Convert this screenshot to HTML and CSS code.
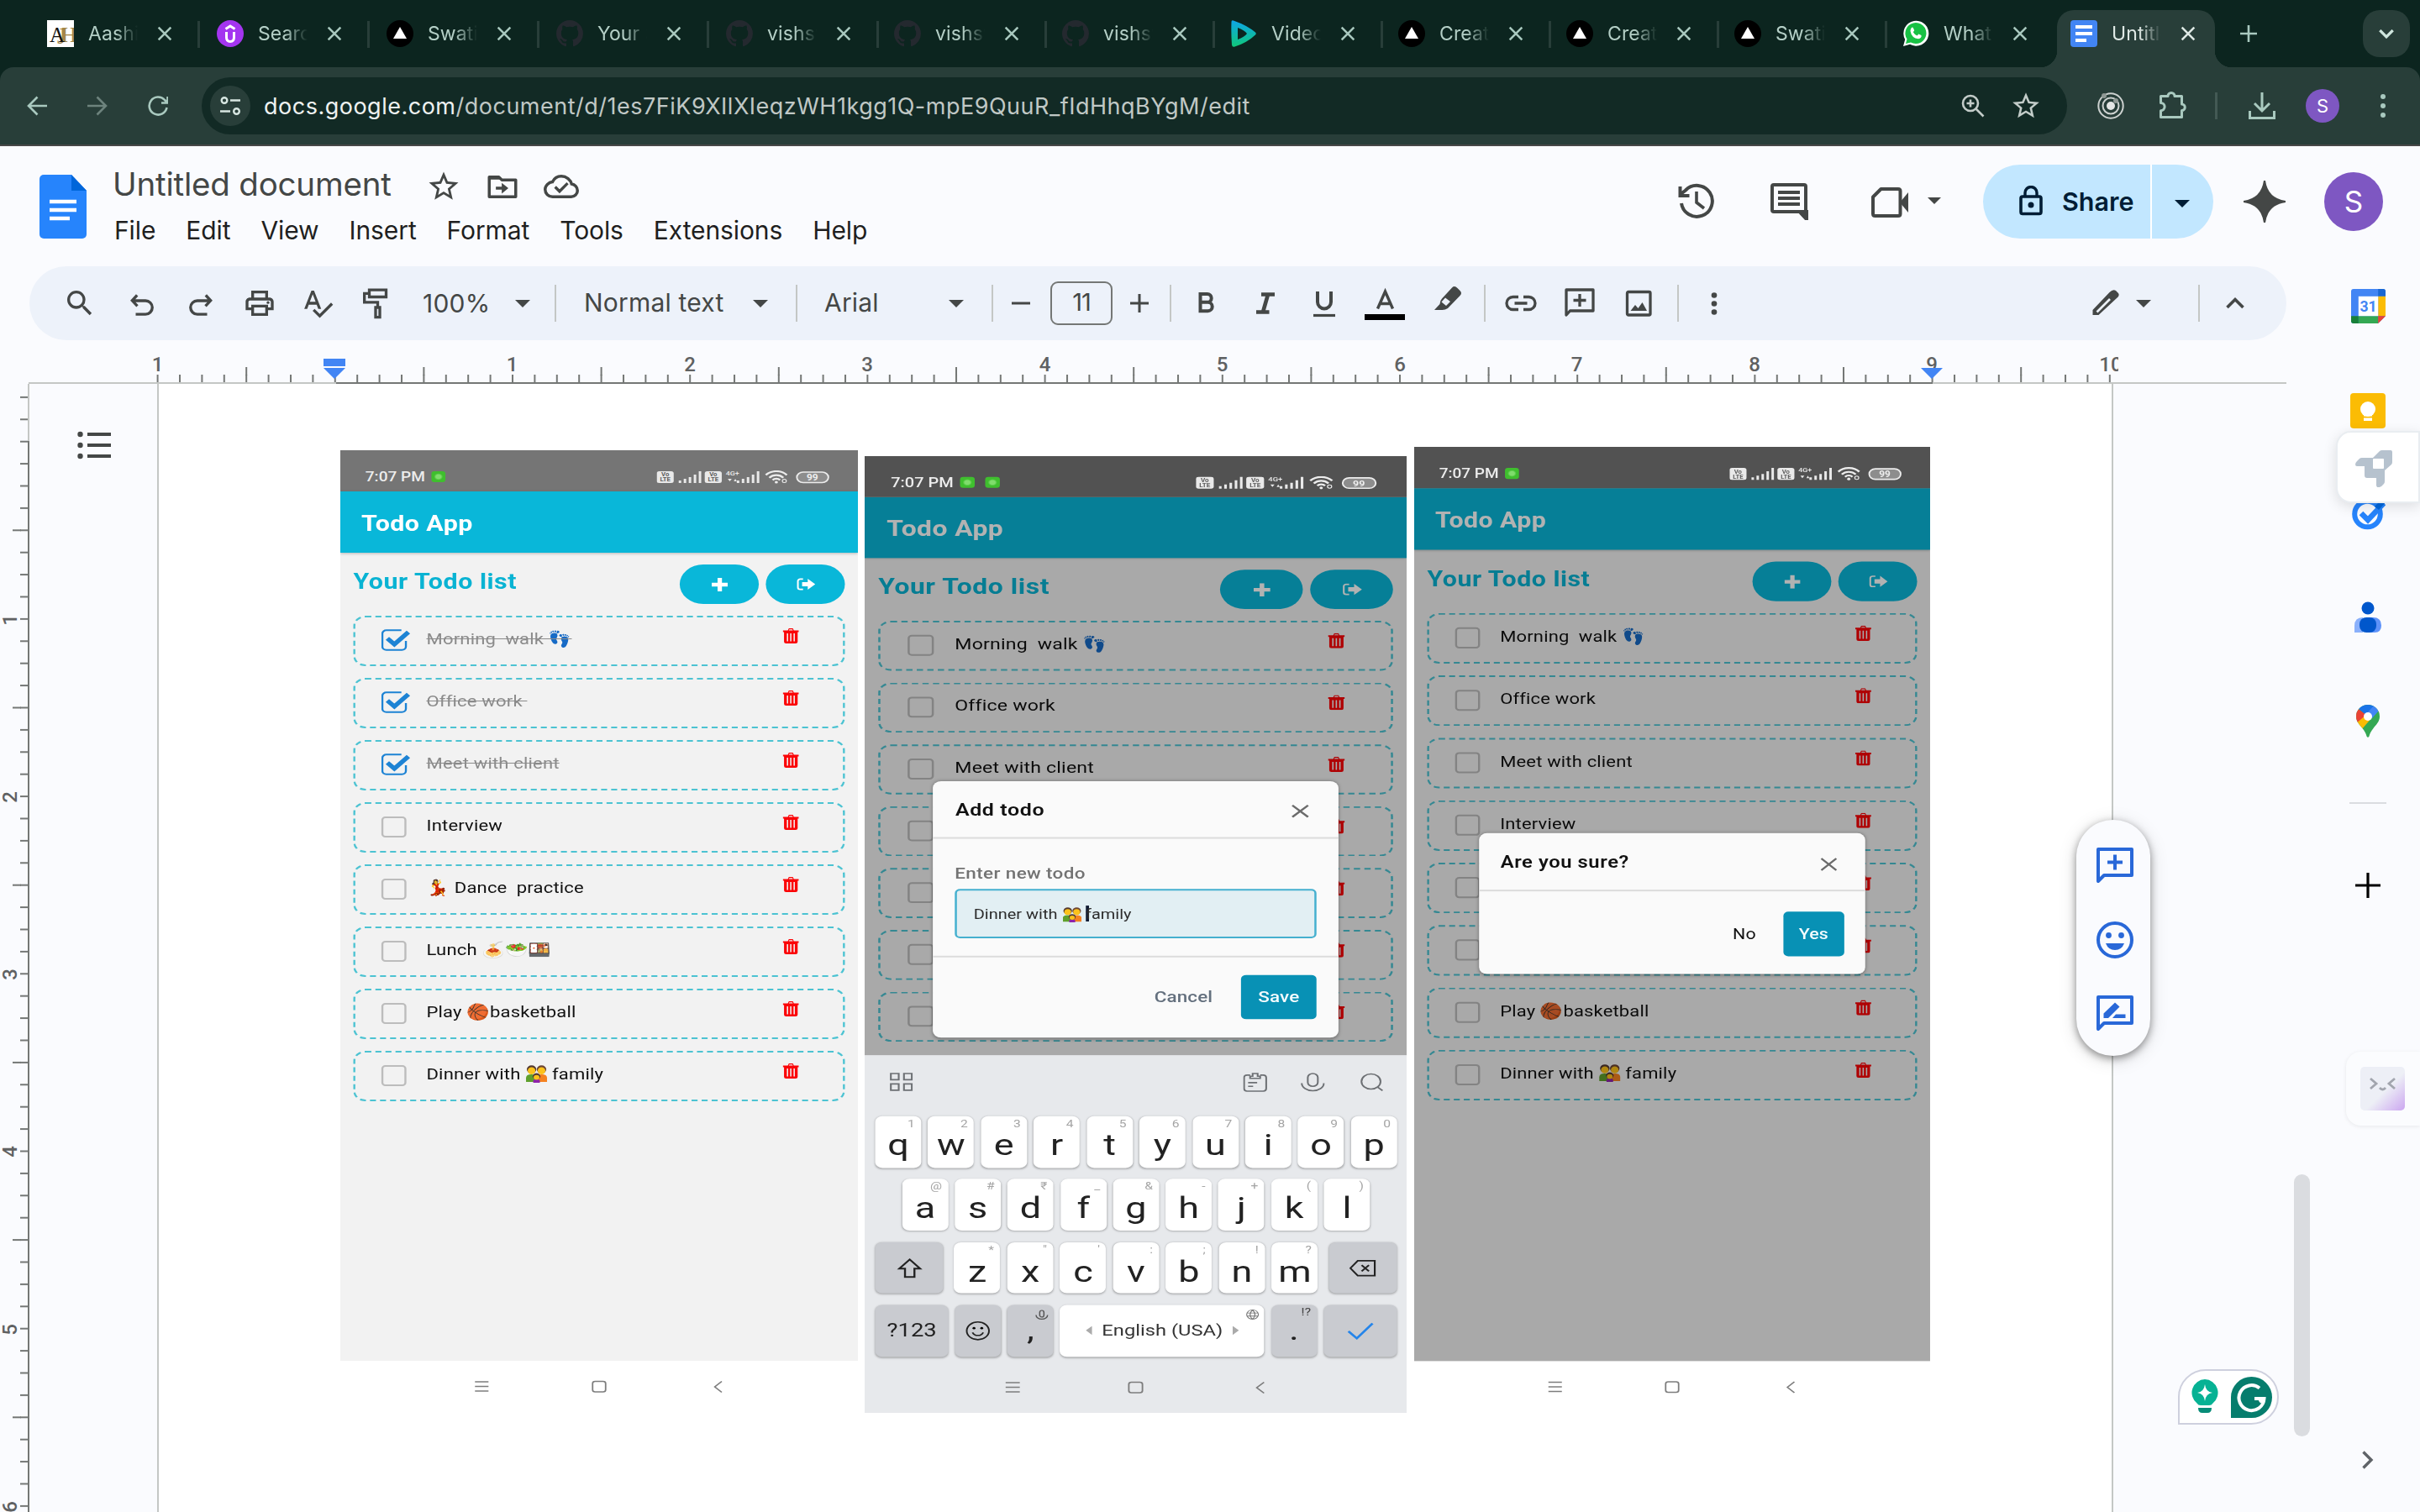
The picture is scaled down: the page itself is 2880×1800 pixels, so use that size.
FILE: index.html
```html
<!DOCTYPE html>
<html lang="en">
<head>
<meta charset="utf-8">
<title>Untitled document</title>
<link rel="stylesheet" href="styles.css">
</head>
<body>
<svg class="sprite" aria-hidden="true">
  <symbol id="close" viewBox="0 0 24 24"><path d="M4 4l16 16M20 4L4 20" fill="none" stroke="currentColor" stroke-width="2.8"/></symbol>
  <symbol id="caret" viewBox="0 0 18 9"><path d="M0 0h18l-9 9z" fill="currentColor"/></symbol>
  <symbol id="tri" viewBox="0 0 32 32"><circle cx="16" cy="16" r="16" fill="#000"/><path d="M16 8l8 14H8z" fill="#fff"/></symbol>
  <symbol id="gh" viewBox="0 0 16 16"><path fill="#24292f" d="M8 0C3.58 0 0 3.58 0 8c0 3.54 2.29 6.53 5.47 7.59.4.07.55-.17.55-.38 0-.19-.01-.82-.01-1.49-2.01.37-2.53-.49-2.69-.94-.09-.23-.48-.94-.82-1.13-.28-.15-.68-.52-.01-.53.63-.01 1.08.58 1.23.82.72 1.21 1.87.87 2.33.66.07-.52.28-.87.51-1.07-1.78-.2-3.64-.89-3.64-3.95 0-.87.31-1.59.82-2.15-.08-.2-.36-1.02.08-2.12 0 0 .67-.21 2.2.82.64-.18 1.32-.27 2-.27s1.36.09 2 .27c1.53-1.04 2.2-.82 2.2-.82.44 1.1.16 1.92.08 2.12.51.56.82 1.27.82 2.15 0 3.07-1.87 3.75-3.65 3.95.29.25.54.73.54 1.48 0 1.07-.01 1.93-.01 2.2 0 .21.15.46.55.38A8.01 8.01 0 0 0 16 8c0-4.42-3.58-8-8-8z"/></symbol>
  <symbol id="star" viewBox="0 0 24 24"><path fill="currentColor" d="M22 9.24l-7.19-.62L12 2 9.19 8.63 2 9.24l5.46 4.73L5.82 21 12 17.27 18.18 21l-1.63-7.03L22 9.24zM12 15.4l-3.76 2.27 1-4.28-3.32-2.88 4.38-.38L12 6.1l1.71 4.04 4.38.38-3.32 2.88 1 4.28L12 15.4z"/></symbol>
  <symbol id="trash" viewBox="0 0 16 18"><path fill="#fb0407" d="M5 2.5L6 0h4l1 2.5h5v2h-1.2V16q0 2-2 2H3.200q-2 0-2-2V4.500H0v-2zM6.500 1.300L6 2.500h4L9.500 1.300zM4 6v9.500h1.300V6zM7.300 6v9.500h1.300V6zM10.700 6v9.500H12V6z" fill-rule="evenodd"/></symbol>
  <symbol id="check" viewBox="0 0 29 26"><path d="M20 1.300H5a4 4 0 0 0-4 4v15.400a4 4 0 0 0 4 4h15.500a4 4 0 0 0 4-4V14" fill="none" stroke="#1d83d4" stroke-width="2"/><path d="M6 11l7 7L27 3.500" fill="none" stroke="#1d83d4" stroke-width="4.800"/></symbol>
  <symbol id="plus" viewBox="0 0 16 16"><path d="M8 0v16M0 8h16" stroke="#fff" stroke-width="4.400"/></symbol>
  <symbol id="logout" viewBox="0 0 20 16"><path d="M7 1.500H4a2.500 2.500 0 0 0-2.500 2.500v8A2.500 2.500 0 0 0 4 14.500h3" fill="none" stroke="#fff" stroke-width="1.800"/><path d="M12 1l8 7-8 7v-4.300H6V5.300h6z" fill="#fff"/></symbol>
  <symbol id="family" viewBox="0 0 22 22"><path d="M0 21v-5q0-4.500 5.500-4.500T11 16v5z" fill="#5fa02c"/><path d="M11 21v-5q0-4.500 5.500-4.500T22 16v5z" fill="#f58220"/><circle cx="5.800" cy="5.300" r="5" fill="#543930"/><circle cx="16.200" cy="5.300" r="5" fill="#6d4534"/><ellipse cx="5.800" cy="7" rx="4" ry="4.400" fill="#fcc21b"/><ellipse cx="16.200" cy="7" rx="4" ry="4.400" fill="#fcc21b"/><path d="M7.500 22v-2q0-2.500 3.500-2.500t3.500 2.500v2z" fill="#8e24aa"/><circle cx="11" cy="14" r="4" fill="#543930"/><ellipse cx="11" cy="15.300" rx="3" ry="3" fill="#fcc21b"/></symbol>
  <symbol id="phonestat" viewBox="0 0 174 16"><g fill="#e9e9e9"><rect x="0" y="1" width="17" height="14" rx="2.500"/><rect x="48" y="1" width="17" height="14" rx="2.500"/><path d="M22 12h2.500v3H22zM27 10h2.500v5H27zM32 8h2.500v7H32zM37 5h2.500v10H37zM42 1h2.500v14H42zM80 12h2.500v3H80zM85 10h2.500v5H85zM90 8h2.500v7H90zM95 5h2.500v10H95zM100 1h2.500v14H100z"/><path d="M71 10l2 3 2-3zM77 13l1.500-3 1.500 3z"/></g><g fill="#5c5c5c" font-family="Roboto" font-weight="700" font-size="6.500" text-anchor="middle"><text x="8.500" y="7.500">Vo</text><text x="8.500" y="13.500">LTE</text><text x="56.500" y="7.500">Vo</text><text x="56.500" y="13.500">LTE</text></g><text x="69" y="6" font-family="Roboto" font-size="7.500" fill="#e9e9e9">4G+</text><g fill="none" stroke="#ececec" stroke-width="2.200"><path d="M109 5.500a14.500 14.500 0 0 1 21 0M112.500 8.700a9.500 9.500 0 0 1 14 0M115.800 11.500a5 5 0 0 1 7.400 0"/><rect x="140" y="2" width="31.500" height="12.500" rx="6.200" stroke-width="1.600" fill="#8d8d8d"/><circle cx="127.500" cy="12.500" r="2" stroke-width="1"/></g><circle cx="119.500" cy="14" r="1.600" fill="#ececec"/><text x="155.500" y="11.800" font-family="Roboto" font-weight="700" font-size="10" fill="#eee" text-anchor="middle">99</text></symbol>
  <symbol id="phonenav" viewBox="0 0 517 60"><g fill="none" stroke="#7d7d7d" stroke-width="1.500"><path d="M134.500 25h13.500M134.500 30.500h13.500M134.500 36h13.500"/><rect x="252" y="24.500" width="13" height="12.500" rx="2.500"/><path d="M381 24.500l-7 6.500 7 6.500"/></g></symbol>
</svg>

<div class="tabs">
  <div class="tab"><svg class="fav" viewBox="0 0 32 32"><rect width="32" height="32" fill="#fff"/><g font-family="Liberation Serif" font-size="25"><text x="17" y="26" fill="#a48646">H</text><text x="12" y="28" fill="#a48646" font-size="28">J</text><text x="3" y="26" fill="#111">A</text></g></svg><span>Aashish</span><svg class="x"><use href="#close"/></svg></div>
  <div class="tab"><svg class="fav" viewBox="0 0 32 32"><circle cx="16" cy="16" r="16" fill="#a435f0"/><path d="M10.500 10.500L16 7l5.500 3.500M11.500 14v6.500q0 5 4.500 5t4.500-5V14" fill="none" stroke="#fff" stroke-width="3"/></svg><span>Search</span><svg class="x"><use href="#close"/></svg></div>
  <div class="tab"><svg class="fav"><use href="#tri"/></svg><span>Swatik</span><svg class="x"><use href="#close"/></svg></div>
  <div class="tab"><svg class="fav"><use href="#gh"/></svg><span>Your Se</span><svg class="x"><use href="#close"/></svg></div>
  <div class="tab n"><svg class="fav"><use href="#gh"/></svg><span>vishsw</span><svg class="x"><use href="#close"/></svg></div>
  <div class="tab n"><svg class="fav"><use href="#gh"/></svg><span>vishsw</span><svg class="x"><use href="#close"/></svg></div>
  <div class="tab n"><svg class="fav"><use href="#gh"/></svg><span>vishsw</span><svg class="x"><use href="#close"/></svg></div>
  <div class="tab n"><svg class="fav" viewBox="0 0 32 32"><defs><linearGradient id="vg" x1="0" y1="0" x2="0" y2="1"><stop offset="0" stop-color="#0ea5e9"/><stop offset="1" stop-color="#10c878"/></linearGradient></defs><path fill="url(#vg)" fill-rule="evenodd" d="M1.500 2Q1.500-.500 4.500.700Q20 6 30 14.500q1.500 1.500 0 3Q20 27 5.500 31.500 2.500 32.500 2 29.500Q1 16 1.500 2zM9 9v14q8-3 11-7-3-4-11-7z"/></svg><span>Videos</span><svg class="x"><use href="#close"/></svg></div>
  <div class="tab n"><svg class="fav"><use href="#tri"/></svg><span>Create</span><svg class="x"><use href="#close"/></svg></div>
  <div class="tab n"><svg class="fav"><use href="#tri"/></svg><span>Create</span><svg class="x"><use href="#close"/></svg></div>
  <div class="tab n"><svg class="fav"><use href="#tri"/></svg><span>Swatik</span><svg class="x"><use href="#close"/></svg></div>
  <div class="tab n last"><svg class="fav" viewBox="0 0 32 32"><path d="M1 31l2.200-8A15 15 0 1 1 9 28.800z" fill="#fff"/><path d="M4 28l1.500-5.500A12.500 12.500 0 1 1 10 26.600z" fill="#18c144"/><path d="M10.500 9.500q1.500-2 2.500 0l1.200 2.800-1.400 2q1.600 3 4.800 4.200l1.700-2 3.200 1.600q.700 3.600-3.500 4.200Q11 21.500 9.500 13q0-2 1-3.500z" fill="#fff"/></svg><span>WhatsA</span><svg class="x"><use href="#close"/></svg></div>
  <div class="tab active"><svg class="fav" viewBox="0 0 32 32"><rect width="32" height="32" rx="4" fill="#4285f4"/><path d="M6 8h20M6 16h20M6 24h13" stroke="#fff" stroke-width="3.800"/></svg><span>Untitled</span><svg class="x"><use href="#close"/></svg></div>
  <svg class="newtab" viewBox="0 0 20 20"><path d="M10 0v20M0 10h20" stroke="#a9c9bf" stroke-width="2.600"/></svg>
  <div class="tabsearch"><svg viewBox="0 0 16 10"><path d="M1 1l7 7 7-7" fill="none" stroke="#cfe6de" stroke-width="3"/></svg></div>
</div>

<div class="addr">
  <svg class="ai" viewBox="0 0 24 24"><path d="M24 12H2M12.500 1.500L2 12l10.500 10.500" fill="none" stroke="#a9c9bf" stroke-width="2.600"/></svg>
  <svg class="ai" viewBox="0 0 24 24"><path d="M0 12h22M11.500 1.500L22 12 11.500 22.500" fill="none" stroke="#6d837d" stroke-width="2.600"/></svg>
  <svg class="ai" viewBox="0 0 24 24"><path d="M22.500 14A10.500 10.500 0 1 1 20 5l3 3M23.500 1v7.500H16" fill="none" stroke="#a9c9bf" stroke-width="2.600"/></svg>
  <div class="omni">
    <div class="site"><svg viewBox="0 0 24 24"><g fill="none" stroke="#d7e6e1" stroke-width="2.400"><circle cx="5" cy="5.500" r="3.300"/><path d="M12 5.500h12M0 18.500h12"/><circle cx="19.500" cy="18.500" r="3.300"/></g></svg></div>
    <div class="url"><b>docs.google.com</b>/document/d/1es7FiK9XIlXIeqzWH1kgg1Q-mpE9QuuR_fIdHhqBYgM/edit</div>
    <svg class="mag" viewBox="0 0 28 28"><g fill="none" stroke="#c3ccc9" stroke-width="2.600"><circle cx="11" cy="11" r="9"/><path d="M17.500 17.500l9 9M11 6.500v9M6.500 11h9"/></g></svg>
    <svg class="bm"><use href="#star"/></svg>
  </div>
  <svg class="ext" viewBox="0 0 32 32"><g fill="none" stroke="#cdd2d0"><circle cx="16" cy="16" r="14.700" stroke-width="2"/><circle cx="16" cy="16" r="9.500" stroke-width="2"/></g><circle cx="16" cy="16" r="5" fill="#e4e6e5"/><circle cx="8" cy="4" r="3" fill="#8f9894"/><circle cx="22" cy="10" r="3" fill="#8f9894"/></svg>
  <svg class="puz" viewBox="0 0 34 34"><path d="M3.500 5.500h8.500a4 4 0 0 1 8 0h8.500V15a3.500 3.500 0 0 1 0 7.500v8h-25v-7.800a4.500 4.500 0 0 0 0-9.200z" fill="none" stroke="#a9c9bf" stroke-width="3" stroke-linejoin="round"/></svg>
  <i class="asep"></i>
  <svg class="dl" viewBox="0 0 32 32"><path d="M16 0v21M7 13l9 9 9-9M1.500 22v8.500h29V22" fill="none" stroke="#a9c9bf" stroke-width="3"/></svg>
  <div class="me">S</div>
  <svg class="kebab" viewBox="0 0 6 28"><g fill="#a9c9bf"><circle cx="3" cy="3" r="3"/><circle cx="3" cy="14" r="3"/><circle cx="3" cy="25" r="3"/></g></svg>
</div>

<div class="docs">
  <header class="dochead">
    <svg class="logo" viewBox="0 0 56 76"><path d="M5 0h33l18 19v52a5 5 0 0 1-5 5H5a5 5 0 0 1-5-5V5a5 5 0 0 1 5-5z" fill="#2684fc"/><path d="M38 0l18 19H38z" fill="#0066da"/><path d="M12 32h32M12 42h32M12 52h24" stroke="#fff" stroke-width="4.600"/></svg>
    <div class="heads">
      <div class="titleline"><span class="dtitle">Untitled document</span>
        <svg class="ti"><use href="#star"/></svg>
        <svg class="ti fo" viewBox="0 0 24 24"><path d="M3 19V5.500h6.500l2 2H21V19z" fill="none" stroke="currentColor" stroke-width="2" stroke-linejoin="round"/><path d="M3 4.800h6.500l2.500 2.500H3zM7.500 12.200h4V9.500l4.500 3.700-4.500 3.700v-2.700h-4z" fill="currentColor"/></svg>
        <svg class="ti cl" viewBox="0 0 24 24"><path fill="none" stroke="currentColor" stroke-width="2" d="M19 10.300C18.400 7.500 15.500 5 12 5 9.500 5 7.200 6.300 6 8.900 3.500 9.200 1 11.300 1 14a5 5 0 0 0 5 5h12.800A4.200 4.200 0 0 0 23 14.800c0-2.300-1.800-4.200-4-4.500z"/><path d="M7.800 12.300l3 3 5.500-5.500" fill="none" stroke="currentColor" stroke-width="1.900"/></svg>
      </div>
      <nav class="menus"><span>File</span><span>Edit</span><span>View</span><span>Insert</span><span>Format</span><span>Tools</span><span>Extensions</span><span>Help</span></nav>
    </div>
    <svg class="hist" viewBox="0 0 44 44"><path d="M4 24a18.500 18.500 0 1 0 5-15.500L2 14M2.500 4v11h11" fill="none" stroke="#444746" stroke-width="4"/><path d="M22 10v13l9 7" fill="none" stroke="#444746" stroke-width="3.600"/></svg>
    <svg class="comm" viewBox="0 0 44 44"><path d="M2 4q0-2 2-2h36q2 0 2 2v38l-7.500-8H4q-2 0-2-2z" fill="none" stroke="#444746" stroke-width="4"/><path d="M36 34h8v10zM9 11h26M9 18h26M9 25h26" fill="#444746" stroke="#444746" stroke-width="4"/></svg>
    <svg class="cam" viewBox="0 0 44 36"><path d="M11.500 2H32q2.500 0 2.500 2.500v27q0 2.500-2.500 2.500H4.500Q2 34 2 31.500v-20z" fill="none" stroke="#444746" stroke-width="4" stroke-linejoin="round"/><path d="M34 18l10-12v24z" fill="#444746"/></svg>
    <svg class="caret c1"><use href="#caret"/></svg>
    <div class="share"><div class="sl"><svg viewBox="0 0 28 36"><rect x="2" y="13" width="24" height="20.500" rx="2" fill="none" stroke="#001d35" stroke-width="3.600"/><path d="M7 13V8.500a7 7 0 0 1 14 0V13" fill="none" stroke="#001d35" stroke-width="3.400"/><circle cx="14" cy="23" r="3.500" fill="#001d35"/></svg><span>Share</span></div><div class="sr"><svg class="caret"><use href="#caret"/></svg></div></div>
    <svg class="spark" viewBox="0 0 50 50"><path d="M25 0Q28 22 50 25 28 28 25 50 22 28 0 25 22 22 25 0z" fill="#444746" stroke="#444746" stroke-width="2"/></svg>
    <div class="avatar">S</div>
  </header>

  <div class="docbody">
    <main>
      <div class="tb">
        <svg class="i sea" viewBox="0 0 24 24"><path fill="currentColor" d="M15.500 14h-.79l-.28-.27A6.470 6.470 0 0 0 16 9.500 6.500 6.500 0 1 0 9.500 16c1.610 0 3.090-.59 4.230-1.570l.27.28v.79l5 4.990L20.490 19l-4.990-5zm-6 0C7.010 14 5 11.990 5 9.500S7.010 5 9.500 5 14 7.010 14 9.500 11.990 14 9.500 14z"/></svg>
        <svg class="i" viewBox="0 0 24 24"><path d="M8.500 5L5 8.900l3.700 3.900M5 9h9.500a4.800 4.800 0 0 1 0 9.700H7.500" transform="translate(0 1.200)" fill="none" stroke="currentColor" stroke-width="2"/></svg>
        <svg class="i" viewBox="0 0 24 24"><path d="M15.500 5L19 8.900l-3.700 3.900M19 9H9.500a4.800 4.800 0 0 0 0 9.700h7" transform="translate(0 1.200)" fill="none" stroke="currentColor" stroke-width="2"/></svg>
        <svg class="i" viewBox="0 0 24 24"><path fill="currentColor" d="M19 8h-1V3H6v5H5c-1.660 0-3 1.340-3 3v6h4v4h12v-4h4v-6c0-1.660-1.340-3-3-3zM8 5h8v3H8V5zm8 12v2H8v-4h8v2zm2-2v-2H6v2H4v-4c0-.55.45-1 1-1h14c.55 0 1 .45 1 1v4h-2z"/><circle cx="18" cy="11.500" r="1" fill="currentColor"/></svg>
        <svg class="i" viewBox="0 0 24 24"><path fill="currentColor" d="M12.450 16h2.090L9.430 3H7.570L2.460 16h2.090l1.120-3h5.640l1.140 3zm-6.020-5L8.500 5.480 10.570 11H6.430zm15.160.59l-8.090 8.090L9.830 16l-1.410 1.410 5.090 5.090L23 13l-1.410-1.410z" transform="translate(-.6 0)"/></svg>
        <svg class="i pnt" viewBox="0 0 24 24"><path d="M7.500 2.500h12v5h-12zM7.500 5H4v6.300h9.500v3.500M12 15h3v7h-3z" fill="none" stroke="currentColor" stroke-width="2"/></svg>
        <span class="t z">100%</span><svg class="caret"><use href="#caret"/></svg><i class="s s29"></i>
        <span class="t st">Normal text</span><svg class="caret"><use href="#caret"/></svg><i class="s s33"></i>
        <span class="t fn">Arial</span><svg class="caret"><use href="#caret"/></svg><i class="s s33"></i>
        <svg class="pm m1" viewBox="0 0 24 24"><path d="M1 12h22" stroke="#444746" stroke-width="3"/></svg>
        <span class="size">11</span>
        <svg class="pm m2" viewBox="0 0 24 24"><path d="M1 12h22M12 1v22" stroke="#444746" stroke-width="3"/></svg><i class="s s24"></i>
        <svg class="i b" viewBox="0 0 40 40"><path d="M12.500 9h8.300a4.900 4.900 0 0 1 0 9.800h-8.300zM12.500 18.800h9a5.200 5.200 0 0 1 0 10.400h-9zM12.500 9v20" fill="none" stroke="currentColor" stroke-width="4"/></svg>
        <svg class="i g30" viewBox="0 0 40 40"><path d="M15 9.500h16M9 30.500h15.500M23 9.500l-6 21" fill="none" stroke="currentColor" stroke-width="4.600"/></svg>
        <svg class="i g30" viewBox="0 0 40 40"><path d="M12 6v12.500a8 8 0 0 0 16 0V6" fill="none" stroke="currentColor" stroke-width="4"/><path d="M7 34.500h26" stroke="currentColor" stroke-width="3.200"/></svg>
        <svg class="acol" viewBox="0 0 48 40"><path d="M15.500 26.500L24.500 6l9 20.500M18.500 20.500h12" fill="none" stroke="currentColor" stroke-width="3.400"/><path d="M0 33h48v7H0z" fill="#000"/></svg>
        <svg class="i hl" viewBox="0 0 40 40"><path d="M24 4q3-3 6.500.500l3 3q3 3 0 6L19 28.500q-3 2-6.500 2H3l6.500-7q0-4 2.500-6.500zM16 16l-4.500 5 5.500 4.500 5-5z" transform="translate(2 -2.500)" fill="currentColor" fill-rule="evenodd"/></svg>
        <i class="s s24"></i>
        <svg class="i g22" viewBox="0 0 40 40"><path d="M17 12.500h-6.500a7.500 7.500 0 0 0 0 15H17M23 12.500h6.500a7.500 7.500 0 0 1 0 15H23M12.500 20h15" fill="none" stroke="currentColor" stroke-width="3.300"/></svg>
        <svg class="i g30" viewBox="0 0 40 40"><path d="M4 4h32v25H8.500L4 34z" fill="none" stroke="currentColor" stroke-width="3.300" stroke-linejoin="round"/><path d="M20 9v15M12.500 16.500h15" stroke="currentColor" stroke-width="3.300"/></svg>
        <svg class="i g30" viewBox="0 0 40 40"><rect x="6.500" y="6.500" width="27.500" height="27.500" rx="1.500" fill="none" stroke="currentColor" stroke-width="3.300"/><path d="M10.500 29l5.500-7 3.500 4 5-7 5.500 10z" fill="currentColor"/></svg>
        <i class="s s26"></i>
        <svg class="i g22" viewBox="0 0 40 40"><g fill="currentColor"><circle cx="20" cy="10.500" r="3.300"/><circle cx="20" cy="20.500" r="3.300"/><circle cx="20" cy="30.500" r="3.300"/></g></svg>
        <svg class="i pen" viewBox="0 0 40 40"><path d="M6 34v-6L26 7q4-4 7.500-2l3 3q2 3-2 6L13 34z" transform="translate(-1.500 0)" fill="currentColor"/><path d="M9.500 30.500l15.500-15.500" stroke="#edf2fa" stroke-width="2.600"/></svg>
        <svg class="caret g16"><use href="#caret"/></svg><i class="s s56"></i>
        <svg class="i g22" viewBox="0 0 40 40"><path d="M10.500 25l9.500-9.500 9.500 9.500" fill="none" stroke="currentColor" stroke-width="3.600"/></svg>
      </div>

      <svg class="ruler" viewBox="0 0 2721 52" width="2721" height="52">
        <defs>
          <pattern id="sm" x="397.800" y="0" width="26.400" height="60" patternUnits="userSpaceOnUse"><rect width="2" height="60" fill="#747775"/></pattern>
          <pattern id="bg" x="503.400" y="0" width="211.200" height="60" patternUnits="userSpaceOnUse"><rect width="2" height="60" fill="#747775"/></pattern>
          <clipPath id="numclip"><rect width="2521" height="52"/></clipPath>
        </defs>
        <rect x="186" y="41" width="2327" height="9" fill="url(#sm)"/>
        <rect x="186" y="32" width="2327" height="10" fill="url(#bg)"/>
        <path d="M34 51h2687" stroke="#c4c7c5" stroke-width="2"/><path d="M400 51h1900" stroke="#747775" stroke-width="2"/>
        <g class="num" clip-path="url(#numclip)"><text x="187.500" y="36.500">1</text><text x="609.500" y="36.500">1</text><text x="821" y="36.500">2</text><text x="1032" y="36.500">3</text><text x="1243.500" y="36.500">4</text><text x="1454.500" y="36.500">5</text><text x="1666" y="36.500">6</text><text x="1876.500" y="36.500">7</text><text x="2088" y="36.500">8</text><text x="2299" y="36.500">9</text><text x="2512" y="36.500">10</text></g>
        <path d="M385 22h26v9h-26zM385 33h26l-13 13zM2286 33h26l-13 13z" fill="#4285f4"/>
      </svg>

      <div class="canvas">
        <svg class="vruler" viewBox="0 0 36 1343" width="36" height="1343">
          <defs>
            <pattern id="vs" x="0" y="67.700" width="40" height="26.400" patternUnits="userSpaceOnUse"><rect width="40" height="2" fill="#747775"/></pattern>
            <pattern id="vb" x="0" y="173.300" width="40" height="211.200" patternUnits="userSpaceOnUse"><rect width="40" height="2" fill="#747775"/></pattern>
          </defs>
          <rect x="24" y="10" width="10" height="1333" fill="url(#vs)"/><rect x="15" y="100" width="10" height="1243" fill="url(#vb)"/>
          <path d="M34 0v68" stroke="#c4c7c5" stroke-width="2"/><path d="M34 68v1275" stroke="#747775" stroke-width="2"/>
          <g class="num"><text transform="translate(20 281) rotate(-90)">1</text><text transform="translate(20 492) rotate(-90)">2</text><text transform="translate(20 703) rotate(-90)">3</text><text transform="translate(20 914) rotate(-90)">4</text><text transform="translate(20 1126) rotate(-90)">5</text><text transform="translate(20 1337) rotate(-90)">6</text></g>
        </svg>
        <div class="gutter"><svg viewBox="0 0 40 34"><path d="M12 4h28M12 17h28M12 30h28" stroke="#444746" stroke-width="4.200"/><g fill="#444746"><circle cx="3.500" cy="4" r="3.200"/><circle cx="3.500" cy="17" r="3.200"/><circle cx="3.500" cy="30" r="3.200"/></g></svg></div>
        <article class="page">
          <div class="shot one"><div class="screen">
            <div class="sbar"><span>7:07 PM</span><i></i><svg><use href="#phonestat"/></svg></div>
            <div class="app">Todo App</div>
            <div class="trow"><h2>Your Todo list</h2><div class="pill"><svg class="p"><use href="#plus"/></svg></div><div class="pill"><svg class="l"><use href="#logout"/></svg></div></div>
            <div class="list">
              <div class="row done"><svg class="ck"><use href="#check"/></svg><span>Morning&nbsp; walk 👣</span><svg class="tr"><use href="#trash"/></svg></div>
              <div class="row done"><svg class="ck"><use href="#check"/></svg><span>Office work&nbsp;</span><svg class="tr"><use href="#trash"/></svg></div>
              <div class="row done"><svg class="ck"><use href="#check"/></svg><span>Meet with client</span><svg class="tr"><use href="#trash"/></svg></div>
              <div class="row"><i></i><span>Interview</span><svg class="tr"><use href="#trash"/></svg></div>
              <div class="row"><i></i><span>💃 Dance&nbsp; practice</span><svg class="tr"><use href="#trash"/></svg></div>
              <div class="row"><i></i><span>Lunch 🍝🥗🍱</span><svg class="tr"><use href="#trash"/></svg></div>
              <div class="row"><i></i><span>Play 🏀basketball</span><svg class="tr"><use href="#trash"/></svg></div>
              <div class="row"><i></i><span>Dinner with <svg class="fam"><use href="#family"/></svg> family</span><svg class="tr"><use href="#trash"/></svg></div>
            </div>
            <svg class="pnav"><use href="#phonenav"/></svg>
          </div></div>

          <div class="shot two"><div class="screen">
            <div class="sbar"><span>7:07 PM</span><i></i><i class="g2"></i><svg><use href="#phonestat"/></svg></div>
            <div class="app">Todo App</div>
            <div class="trow"><h2>Your Todo list</h2><div class="pill"><svg class="p"><use href="#plus"/></svg></div><div class="pill"><svg class="l"><use href="#logout"/></svg></div></div>
            <div class="list">
              <div class="row"><i></i><span>Morning&nbsp; walk 👣</span><svg class="tr"><use href="#trash"/></svg></div>
              <div class="row"><i></i><span>Office work</span><svg class="tr"><use href="#trash"/></svg></div>
              <div class="row"><i></i><span>Meet with client</span><svg class="tr"><use href="#trash"/></svg></div>
              <div class="row"><i></i><span></span><svg class="tr"><use href="#trash"/></svg></div>
              <div class="row"><i></i><span></span><svg class="tr"><use href="#trash"/></svg></div>
              <div class="row"><i></i><span></span><svg class="tr"><use href="#trash"/></svg></div>
              <div class="row"><i></i><span></span><svg class="tr"><use href="#trash"/></svg></div>
            </div>
            <div class="dim"></div>
            <div class="modal add">
              <div class="mh"><b>Add todo</b><svg viewBox="0 0 17 16"><path d="M1 1l15 14M16 1L1 15" stroke="#6b6b6b" stroke-width="2.200"/></svg></div>
              <div class="mb"><label>Enter new todo</label><div class="inp">Dinner with <svg class="fam"><use href="#family"/></svg> <em></em>family</div></div>
              <div class="mf"><span class="cancel">Cancel</span><span class="btn">Save</span></div>
            </div>
            <div class="kb">
              <div class="kt"><svg viewBox="0 0 22 22" class="k1"><path d="M1 1h7.500v7.500H1zM13.500 1H21v7.500h-7.500zM1 13.500h7.500V21H1zM13.500 13.500H21V21h-7.500z" fill="none" stroke="#6d7074" stroke-width="1.700"/></svg>
                <svg viewBox="0 0 24 24" class="k2"><path d="M7 3H4Q1 3 1 6v14q0 3 3 3h16q3 0 3-3V6q0-3-3-3h-3M7 7V4.500h2.500V1h5v3.500H17V7zM5 12.500h9M5 17h5" fill="none" stroke="#6d7074" stroke-width="1.700"/></svg>
                <svg viewBox="0 0 24 24" class="k3"><rect x="7" y="1" width="10" height="16" rx="5" fill="none" stroke="#6d7074" stroke-width="1.700"/><path d="M1 13a11 9.500 0 0 0 22 0" fill="none" stroke="#6d7074" stroke-width="1.700"/></svg>
                <svg viewBox="0 0 24 24" class="k4"><circle cx="11.500" cy="11" r="9.500" fill="none" stroke="#6d7074" stroke-width="1.700"/><path d="M18 18l5 4.500" stroke="#6d7074" stroke-width="1.700"/></svg></div>
              <div class="kr"><b><s>1</s>q</b><b><s>2</s>w</b><b><s>3</s>e</b><b><s>4</s>r</b><b><s>5</s>t</b><b><s>6</s>y</b><b><s>7</s>u</b><b><s>8</s>i</b><b><s>9</s>o</b><b><s>0</s>p</b></div>
              <div class="kr r2"><b><s>@</s>a</b><b><s>#</s>s</b><b><s>₹</s>d</b><b><s>_</s>f</b><b><s>&amp;</s>g</b><b><s>-</s>h</b><b><s>+</s>j</b><b><s>(</s>k</b><b><s>)</s>l</b></div>
              <div class="kr r3"><b class="dk w65"><svg viewBox="0 0 24 24"><path d="M12 1.500L2 12.500h5.500v10h9v-10H22z" fill="none" stroke="#222" stroke-width="1.900"/></svg></b><b><s>*</s>z</b><b><s>"</s>x</b><b><s>'</s>c</b><b><s>:</s>v</b><b><s>;</s>b</b><b><s>!</s>n</b><b><s>?</s>m</b><b class="dk w65"><svg viewBox="0 0 28 22"><path d="M9 1.500h17.500v19H9L1.500 11zM13 7l7.500 8M20.500 7L13 15" fill="none" stroke="#222" stroke-width="1.900"/></svg></b></div>
              <div class="kr r4"><b class="dk w70 num1">?123</b><b class="dk"><svg viewBox="0 0 26 26"><g fill="none" stroke="#222" stroke-width="1.700"><circle cx="13" cy="13" r="11.500"/><path d="M7.500 15a5.800 5.800 0 0 0 11 0"/></g><circle cx="9" cy="9.500" r="1.500"/><circle cx="17" cy="9.500" r="1.500"/></svg></b><b class="dk">,<svg class="h" viewBox="0 0 13 13"><path d="M4.500 4a2 2.500 0 0 1 4 0v3a2 2.500 0 0 1-4 0zM1 7a5.500 5 0 0 0 11 0" fill="none" stroke="#555" stroke-width="1.200"/></svg></b><b class="sp"><svg class="ar" viewBox="0 0 6 11"><path d="M6 0v11L0 5.500z" fill="#aaa"/></svg><span>English (USA)</span><svg class="ar" viewBox="0 0 6 11"><path d="M0 0v11l6-5.500z" fill="#aaa"/></svg><svg class="h" viewBox="0 0 14 14"><path d="M7 1a6 6 0 1 0 0 12A6 6 0 0 0 7 1zM1 5h12M1 9h12M7 1q-5 6 0 12M7 1q5 6 0 12" fill="none" stroke="#777" stroke-width="1"/></svg></b><b class="dk"><s class="dks">!?</s>.</b><b class="dk w70"><svg viewBox="0 0 26 22"><path d="M1.500 11.500l8 8.500L24.500 2" fill="none" stroke="#2585ea" stroke-width="2.400"/></svg></b></div>
            </div>
            <svg class="pnav"><use href="#phonenav"/></svg>
          </div></div>

          <div class="shot three"><div class="screen">
            <div class="sbar"><span>7:07 PM</span><i></i><svg><use href="#phonestat"/></svg></div>
            <div class="app">Todo App</div>
            <div class="trow"><h2>Your Todo list</h2><div class="pill"><svg class="p"><use href="#plus"/></svg></div><div class="pill"><svg class="l"><use href="#logout"/></svg></div></div>
            <div class="list">
              <div class="row"><i></i><span>Morning&nbsp; walk 👣</span><svg class="tr"><use href="#trash"/></svg></div>
              <div class="row"><i></i><span>Office work</span><svg class="tr"><use href="#trash"/></svg></div>
              <div class="row"><i></i><span>Meet with client</span><svg class="tr"><use href="#trash"/></svg></div>
              <div class="row"><i></i><span>Interview</span><svg class="tr"><use href="#trash"/></svg></div>
              <div class="row"><i></i><span></span><svg class="tr"><use href="#trash"/></svg></div>
              <div class="row"><i></i><span></span><svg class="tr"><use href="#trash"/></svg></div>
              <div class="row"><i></i><span>Play 🏀basketball</span><svg class="tr"><use href="#trash"/></svg></div>
              <div class="row"><i></i><span>Dinner with <svg class="fam"><use href="#family"/></svg> family</span><svg class="tr"><use href="#trash"/></svg></div>
            </div>
            <div class="dim"></div>
            <div class="modal sure">
              <div class="mh"><b>Are you sure?</b><svg viewBox="0 0 17 16"><path d="M1 1l15 14M16 1L1 15" stroke="#6b6b6b" stroke-width="2.200"/></svg></div>
              <div class="mf"><span class="no">No</span><span class="btn">Yes</span></div>
            </div>
            <svg class="pnav"><use href="#phonenav"/></svg>
          </div></div>
        </article>
      </div>
    </main>

    <aside class="side">
      <svg class="cal" viewBox="0 0 42 42"><rect width="42" height="42" rx="3" fill="#4285f4"/><path d="M33 0h6q3 0 3 3v6h-9z" fill="#1967d2"/><path d="M33 9h9v24h-9z" fill="#fbbc04"/><path d="M9 33h24v9H9z" fill="#34a853"/><path d="M0 33h9v9H3q-3 0-3-3z" fill="#188038"/><path d="M42 33v9h-9z" fill="#fafbfe"/><path d="M33 33h9l-9 9z" fill="#ea4335"/><path d="M9 9h24v24H9z" fill="#fff"/><text x="21" y="28" font-family="Roboto" font-weight="700" font-size="18" fill="#4285f4" text-anchor="middle">31</text></svg>
      <svg class="keep" viewBox="0 0 42 42"><rect width="42" height="42" rx="4" fill="#fbbc04"/><circle cx="21" cy="19" r="9" fill="#fff"/><path d="M16 24h10v3.500H16zM16 29.500h10v3.500H16z" fill="#fff"/></svg>
      <svg class="task" viewBox="0 0 42 42"><circle cx="20.500" cy="22" r="15.300" fill="none" stroke="#2684fc" stroke-width="6"/><path d="M13 21l8 8L40 9" fill="none" stroke="#2684fc" stroke-width="6.500"/><path d="M29 13l8-8 5 3-8 9z" fill="#0066da"/></svg>
      <svg class="cont" viewBox="0 0 32 38"><circle cx="16" cy="8" r="7.500" fill="#0057cc"/><path d="M0 37v-8q0-10 10-10v18z" fill="#8ab0fb"/><path d="M18 19h4q10 0 10 9.500 0 8.500-8 8.500h-6z" fill="#5e92f9"/><rect x="6" y="19" width="20" height="18" rx="8" fill="#0057cc"/></svg>
      <svg class="maps" viewBox="0 0 28 39"><clipPath id="pin"><path d="M14 0a14 14 0 0 1 14 14c0 6-4 9.500-7.500 14C17.500 32 16 35 15.500 37.500q-1.500 2.500-3 0C12 35 10.500 32 7.500 28 4 23.500 0 20 0 14A14 14 0 0 1 14 0z"/></clipPath><g clip-path="url(#pin)"><path d="M0 0h28v39H0z" fill="#34a853"/><path d="M0 22L14 8l6 6L6 30z" fill="#fbbc04"/><path d="M0 3l12 9L0 22z" fill="#ea4335"/><path d="M2 4L14 14 22 0H4z" fill="#1a73e8"/><path d="M9 14L22 0l6 6-9 10z" fill="#4285f4"/></g><circle cx="14" cy="14" r="5" fill="#fff"/></svg>
      <i class="sdiv"></i>
      <svg class="add2" viewBox="0 0 30 30"><path d="M15 0v30M0 15h30" stroke="#000" stroke-width="3.200"/></svg>
      <svg class="exp" viewBox="0 0 14 22"><path d="M1.500 1.500L11 11l-9.500 9.500" fill="none" stroke="#5f6368" stroke-width="3.400"/></svg>
    </aside>
  </div>
</div>

<div class="rocket"><svg viewBox="0 0 44 44"><path d="M0 17Q0 15 2 13l3-3q1-1 3-1h13L29 1q1-1 3-1h10q2 0 2 2v12q0 2-1 3l-8 7v13q0 2-1 3l-3 3q-5 3-6-1V33H14q-3 0-3-3V19H2q-2 0-2-2zM22 10q-1 0-1 1v10q0 1 1 1h11q1 0 1-1V11q0-1-1-1z" fill="#b6c2ce" fill-rule="evenodd"/></svg></div>
<div class="cpill">
  <svg viewBox="0 0 46 46"><path d="M3 3h40v31H10L3 41z" fill="none" stroke="#2968d8" stroke-width="4" stroke-linejoin="round"/><path d="M23 9.500v18M14 18.500h18" stroke="#2968d8" stroke-width="4"/></svg>
  <svg viewBox="0 0 46 46"><circle cx="23" cy="23" r="20" fill="none" stroke="#2968d8" stroke-width="4"/><g fill="#2968d8"><circle cx="15.500" cy="17.500" r="3.400"/><circle cx="30.500" cy="17.500" r="3.400"/><path d="M12 27h22q-3 8-11 8t-11-8z"/></g></svg>
  <svg viewBox="0 0 46 46"><path d="M3 3h40v31H10L3 41z" fill="none" stroke="#2968d8" stroke-width="4" stroke-linejoin="round"/><path d="M9.500 28v-5.500L23 9.500l5.500 5L15 28zM20 28l4-4.500h11.500V28z" fill="#2968d8"/></svg>
</div>
<div class="face"><svg viewBox="0 0 53 52"><defs><linearGradient id="fg" x1="0" y1="0" x2="1" y2="1"><stop offset=".55" stop-color="#edeff6"/><stop offset="1" stop-color="#cba6f0"/></linearGradient></defs><rect width="53" height="52" rx="5" fill="url(#fg)"/><path d="M12 14l7 6-7 6M41 14l-7 6 7 6M23 25q3.500 4 7 0" fill="none" stroke="#a2a5ae" stroke-width="2.800"/></svg></div>
<div class="scroll"></div>
<div class="gram"><svg class="bulb" viewBox="0 0 32 42"><path d="M16 0a16 16 0 0 1 9.500 28.500Q24 31 21 31H11q-3 0-4.500-2.500A16 16 0 0 1 16 0z" fill="#07b294"/><path d="M8 34h16q0 6-5 6h-6q-5 0-5-6z" fill="#078c78"/><path d="M16 6q1 9 9 10-8 1-9 10-1-9-9-10 8-1 9-10z" fill="#fff"/></svg><svg class="gg" viewBox="0 0 49 49"><path d="M24.500 0a24.500 24.500 0 1 1 0 49H0V24.500A24.500 24.500 0 0 1 24.500 0z" fill="#067d6d"/><path d="M34 13.500A15 15 0 1 0 39.500 26H28M34 30l5.500-4" fill="none" stroke="#fff" stroke-width="4"/></svg></div>
</body>
</html>
```
FILE: styles.css
```css
* { box-sizing: border-box; }
body { margin: 0; width: 2880px; height: 1800px; overflow: hidden; position: relative; background: #fafbfe; font-family: Inter, "Liberation Sans", sans-serif; display: flex; flex-direction: column; }
svg { display: block; flex: none; }
.sprite { position: absolute; width: 0; height: 0; }

/* browser chrome */
.tabs { height: 80px; flex: none; background: #0c251f; display: flex; align-items: center; padding-left: 56px; }
.tab { width: 202px; height: 80px; display: flex; align-items: center; position: relative; flex: none; }
.tab.n { width: 200px; }
.tab::after { content: ""; position: absolute; left: 179px; top: 25px; width: 3px; height: 32px; background: #283e39; }
.tab.last { width: 184px; }
.tab.last::after, .tab.active::after { display: none; }
.fav { width: 32px; height: 32px; margin-right: 17px; }
.tab span { width: 59px; overflow: hidden; white-space: nowrap; color: #b4cfc6; font-size: 23px; letter-spacing: .1px; -webkit-mask-image: linear-gradient(90deg, #000 55%, transparent); mask-image: linear-gradient(90deg, #000 55%, transparent); }
.x { width: 22px; height: 22px; margin-left: 21px; color: #a9c9bf; }
.tab.active { width: 188px; height: 68px; align-self: flex-end; padding-left: 16px; margin-right: 30px; background: #283e39; border-radius: 20px 20px 0 0; }
.tab.active::before { content: ""; position: absolute; left: -20px; right: -20px; bottom: 0; height: 20px; background: radial-gradient(circle at 0 0, transparent 20px, #283e39 20.500px) left / 20px 20px no-repeat, radial-gradient(circle at 100% 0, transparent 20px, #283e39 20.500px) right / 20px 20px no-repeat; }
.tab.active > * { margin-top: -12px; }
.tab.active span { color: #dfe9e5; }
.tab.active .x { color: #dfe9e5; }
.newtab { width: 20px; height: 20px; }
.tabsearch { width: 56px; height: 56px; border-radius: 20px; background: #283e39; margin-left: auto; margin-right: 12px; display: flex; align-items: center; justify-content: center; }
.tabsearch svg { width: 18px; height: 11px; }
.addr { height: 94px; flex: none; background: #0c251f; border-bottom: 2px solid #474747; display: flex; align-items: center; position: relative; padding-left: 32px; z-index: 0; }
.addr::before { content: ""; position: absolute; inset: 0; background: #283e39; border-radius: 16px 16px 0 0; z-index: -1; }
.ai { width: 24px; height: 24px; margin-right: 48px; }
.omni { width: 2220px; height: 68px; margin-left: -8px; background: #122a25; border-radius: 34px; display: flex; align-items: center; padding-left: 10px; }
.site { width: 48px; height: 48px; border-radius: 24px; background: #283e39; display: flex; align-items: center; justify-content: center; margin-right: 16px; }
.site svg { width: 24px; height: 24px; }
.url { width: 2020px; color: #c0c8c5; font-size: 27px; white-space: nowrap; letter-spacing: .5px; }
.url b { font-weight: 400; color: #eef2f1; }
.mag { width: 28px; height: 28px; margin-right: 30px; }
.bm { width: 38px; height: 38px; color: #c3ccc9; }
.ext { width: 32px; height: 32px; margin-left: 36px; }
.puz { width: 34px; height: 34px; margin-left: 40px; }
.asep { width: 3px; height: 32px; background: #435954; margin-left: 34px; }
.dl { width: 32px; height: 32px; margin-left: 37px; }
.me { width: 40px; height: 40px; border-radius: 50%; background: #7e57c2; color: #fff; font-size: 22px; text-align: center; line-height: 40px; margin-left: 36px; }
.kebab { width: 6px; height: 28px; margin-left: 49px; }

/* document header */
.docs { flex: 1; display: flex; flex-direction: column; min-height: 0; color: #444746; }
.dochead { height: 143px; flex: none; display: flex; align-items: flex-start; padding-left: 47px; }
.logo { width: 56px; height: 76px; margin-top: 34px; }
.heads { width: 1879px; margin-left: 31px; padding-top: 20px; }
.titleline { display: flex; align-items: center; height: 52px; }
.dtitle { width: 373px; font-size: 38.500px; letter-spacing: -.2px; color: #444746; white-space: nowrap; margin-top: -3px; }
.ti { width: 42px; height: 42px; margin-top: 4px; }
.fo { margin-left: 28px; }
.cl { margin-left: 28px; }
.menus { display: flex; height: 60px; align-items: center; color: #1f1f1f; font-size: 30px; letter-spacing: -.1px; gap: 36px; padding-left: 2px; margin-top: -2px; }
.hist { width: 44px; height: 44px; margin: 44px 0 0 -16px; }
.comm { width: 46px; height: 44px; margin: 44px 0 0 65px; }
.cam { width: 46px; height: 36px; margin: 49px 0 0 74px; }
.caret { width: 18px; height: 9px; }
.c1 { margin: 61px 0 0 22px; width: 16px; height: 8px; }
.share { width: 274px; height: 88px; margin: 22px 0 0 50px; border-radius: 44px; overflow: hidden; display: flex; background: #c2e7ff; color: #001d35; }
.sl { width: 201px; border-right: 2px solid #fff; display: flex; align-items: center; padding: 0 0 2px 43px; font-size: 30.500px; font-weight: 600; letter-spacing: 0; }
.sl svg { width: 28px; height: 36px; margin-right: 23px; }
.sr { flex: 1; display: flex; align-items: center; padding: 4px 0 0 27px; }
.spark { width: 50px; height: 50px; margin: 41px 0 0 36px; }
.avatar { width: 70px; height: 70px; border-radius: 50%; margin: 31px 0 0 46px; background: #7e57c2; color: #fff; font-size: 35px; line-height: 70px; text-align: center; }

.docbody { flex: 1; display: flex; min-height: 0; }
main { width: 2721px; flex: none; display: flex; flex-direction: column; }
.tb { height: 88px; flex: none; margin-left: 35px; border-radius: 44px; background: #edf2fa; display: flex; align-items: center; padding: 0 41px 0 40px; }
.i { width: 40px; height: 40px; margin-right: 30px; }
.sea { margin-right: 34px; }
.pnt { margin-right: 37px; margin-left: -2px; }
.t { font-size: 30px; white-space: nowrap; letter-spacing: .2px; margin-top: -2px; }
.z { width: 109px; margin-left: -1px; margin-right: 1px; margin-top: 0; }
.st { width: 201px; margin-left: 33px; }
.fn { width: 148px; margin-left: 32px; }
.s { width: 2px; height: 44px; background: #c4c7c5; flex: none; }
.s29 { margin-left: 29px; } .s33 { margin-left: 33px; } .s24 { margin-left: 24px; } .s26 { margin-left: 26px; } .s56 { margin-left: 56px; }
.pm { width: 24px; height: 24px; }
.m1 { margin-left: 21px; } .m2 { margin-left: 20px; }
.size { width: 74px; height: 52px; margin-left: 23px; border: 2px solid #747775; border-radius: 9px; font-size: 29px; text-align: center; line-height: 46px; letter-spacing: -1px; }
.tb .b { margin: 0 0 0 22px; }
.tb .g30 { margin: 0 0 0 30px; }
.tb .g22 { margin: 0 0 0 22px; }
.g16 { margin-left: 16px; }
.acol { width: 48px; height: 40px; margin-left: 28px; }
.tb .hl { margin: 0 0 0 30px; }
.tb .pen { margin: 0 0 0 auto; }
.ruler { height: 52px; }
.num { font-family: Roboto, sans-serif; font-weight: 500; font-size: 24px; fill: #5f6162; text-anchor: middle; }
.canvas { flex: 1; display: flex; min-height: 0; }
.gutter { width: 151px; padding: 56px 0 0 56px; }
.gutter svg { width: 40px; height: 34px; }
.page { width: 2328px; background: #fff; border: solid #c4c7c5; border-width: 0 2px; display: flex; align-items: flex-start; padding-left: 216px; }

/* phone screenshots */
.shot { flex: none; overflow: hidden; position: relative; font-family: Roboto, "Noto Color Emoji", sans-serif; color: #111; }
.screen { width: 517px; height: 1146px; position: relative; transform-origin: 0 0; display: flex; flex-direction: column; }
.one { width: 616px; height: 1150px; margin-top: 79px; }
.one .screen { transform: scale(1.1915, 1); }
.two { width: 645px; height: 1139px; margin: 86px 0 0 8px; }
.two .screen { transform: scale(1.2476, .9946); }
.three { width: 614px; height: 1152px; margin: 75px 0 0 9px; }
.three .screen { transform: scale(1.1876, 1.004); }
.screen::before { content: ""; position: absolute; inset: 0 0 auto; height: 1084px; background: #f2f2f2; z-index: -1; }
.sbar { height: 49px; background: #757575; color: #ececec; display: flex; align-items: center; padding: 14.500px 0 0 25px; font-size: 16px; font-weight: 500; flex: none; }
.two .sbar, .three .sbar { background: #525252; position: relative; z-index: 2; }
.sbar span { width: 66px; white-space: nowrap; }
.sbar i { width: 14px; height: 13px; border-radius: 3px; background: radial-gradient(#7fdc6c 25%, #3fbf2e 45%); }
.sbar .g2 { margin-left: 10px; }
.sbar svg { width: 174px; height: 16px; margin-left: auto; margin-right: 27px; }
.app { height: 73px; background: #09b7d9; color: #fff; font-size: 25.500px; letter-spacing: .35px; font-weight: 700; line-height: 76px; padding-left: 21px; flex: none; box-shadow: 0 1px 3px rgba(0,0,0,.25); }
.trow { height: 75px; flex: none; display: flex; padding: 14px 13px 0; }
h2 { margin: 5px auto 0 0; font-size: 25.500px; letter-spacing: .45px; line-height: 30px; font-weight: 700; color: #09b3d3; white-space: nowrap; }
.pill { width: 79px; height: 47px; border-radius: 24px; background: #09b7d9; margin-left: 7px; display: flex; align-items: center; justify-content: center; }
.p { width: 16px; height: 16px; } .l { width: 20px; height: 15px; }
.list { padding: 0 13px; display: flex; flex-direction: column; gap: 14px; }
.row { height: 60px; flex: none; border: 2px dashed #4cc3d2; border-radius: 12px; display: flex; padding-left: 26px; }
.row i { width: 25px; height: 25px; margin: 14.500px 20px 0 0; border: 2px solid #bcbcbc; border-radius: 4px; }
.ck { width: 29px; height: 26px; margin: 13.500px 16px 0 0; }
.row span { font-size: 18.500px; letter-spacing: .15px; line-height: 24px; margin-top: 14px; white-space: nowrap; }
.row.done span { color: #8b8b8b; text-decoration: line-through; }
.fam { display: inline-block; width: 22px; height: 21px; vertical-align: -4px; }
.tr { width: 16px; height: 18px; margin: 12.500px 44.500px 0 auto; }
.dim { position: absolute; inset: 0 0 auto; height: 1084px; background: rgba(0,0,0,.3); }
.pnav { position: absolute; left: 0; top: 1084px; width: 517px; height: 60px; }
.modal { position: absolute; left: 65px; width: 387px; background: #fafafa; border-radius: 8px; box-shadow: 0 1px 4px rgba(0,0,0,.35); display: flex; flex-direction: column; }
.add { top: 388.500px; height: 307px; }
.sure { top: 458px; height: 167px; }
.mh { height: 69px; border-bottom: 2px solid #dcdcdc; display: flex; justify-content: space-between; padding: 0 28.500px 0 21.500px; flex: none; }
.mh b { font-size: 20px; letter-spacing: .5px; line-height: 68px; font-weight: 600; }
.mh svg { width: 17px; height: 16px; margin-top: 28.500px; }
.mb { height: 142px; padding: 31px 21px 0; border-bottom: 2px solid #dcdcdc; }
.mb label { display: block; height: 29px; line-height: 22px; font-size: 18px; letter-spacing: .3px; font-weight: 500; color: #737373; }
.inp { height: 59px; border: 2px solid #45b0cf; border-radius: 5px; background: #e2eff3; font-size: 16px; line-height: 57px; padding-left: 16px; color: #2c2c2c; white-space: nowrap; }
.inp .fam { width: 18px; height: 18px; margin-left: 1px; }
.inp em { display: inline-block; width: 3px; height: 19px; background: #111b33; margin: 0 -3px -3px 0; }
.mf { flex: 1; display: flex; align-items: center; justify-content: flex-end; padding-right: 21px; font-size: 18px; letter-spacing: .1px; }
.cancel { color: #64707e; font-weight: 500; margin-right: 27px; }
.sure .mf { padding-top: 3px; }
.no { margin-right: 27px; }
.btn { width: 72px; height: 53px; line-height: 53px; border-radius: 5px; background: #0891b5; color: #f3fbfd; text-align: center; font-weight: 500; }
.sure .btn { width: 61.500px; }

/* on-screen keyboard */
.kb { position: absolute; left: 0; top: 717px; width: 517px; height: 430px; background: #e7e9ec; padding: 0 9.200px 0 10px; }
.kt { height: 73px; display: flex; align-items: center; padding: 0 13px 9px 14px; }
.k1 { width: 22px; height: 22px; margin-right: auto; }
.kt .k2, .kt .k3, .kt .k4 { width: 23px; height: 23px; margin-left: 32.500px; }
.kr { display: flex; justify-content: space-between; height: 61.500px; margin-bottom: 13.900px; }
.r2 { padding: 0 25.700px; }
.r3 b:first-child { margin-right: 4px; } .r3 b:last-child { margin-left: 4px; }
.kr b { width: 44px; height: 61.500px; border-radius: 7px; background: #fff; box-shadow: 0 1px 2px rgba(0,0,0,.25); font-weight: 400; font-size: 36px; line-height: 71px; text-align: center; position: relative; color: #222; flex: none; display: flex; justify-content: center; }
.kr s { position: absolute; right: 6px; top: 2px; font-size: 12.500px; line-height: 14px; text-decoration: none; color: #a5a5a5; }
.kr .dk { background: #c9cbd0; align-items: center; }
.kr .w65 { width: 65px; } .kr .w70 { width: 70px; }
.kr .dk svg { width: 26px; height: 24px; }
.kr svg.h, .kr .dk svg.h { position: absolute; right: 4px; top: 5px; width: 14px; height: 13px; }
.kr .num1 { font-size: 22px; line-height: 66px; }
.kr .sp { width: 195px; font-size: 19px; line-height: 65px; align-items: center; gap: 9px; }
.ar { width: 6px; height: 11px; }
.sp span { color: #333; }
.kr .dks { color: #444; }

/* side panel */
.side { flex: 1; display: flex; flex-direction: column; align-items: center; padding: 27px 0 0 35px; }
.cal { width: 41px; height: 41px; } .keep { width: 42px; height: 42px; margin-top: 83px; }
.task { width: 42px; height: 42px; margin-top: 80px; }
.cont { width: 32px; height: 38px; margin-top: 84px; }
.maps { width: 28px; height: 39px; margin-top: 85px; }
.sdiv { width: 44px; height: 2px; background: #dadce0; margin-top: 77px; flex: none; }
.add2 { width: 30px; height: 30px; margin-top: 82px; }
.exp { width: 14px; height: 22px; margin-top: 658px; }

/* floating widgets */
.rocket { position: absolute; left: 2780px; top: 513px; width: 100px; height: 86px; background: #fff; border: 2px solid #e9edf1; border-radius: 18px 0 0 18px; box-shadow: 0 4px 16px rgba(0,0,0,.12); padding: 21px 0 0 21px; }
.rocket svg { width: 44px; height: 44px; }
.cpill { position: absolute; left: 2471px; top: 976px; width: 88px; height: 281px; border-radius: 44px; background: #fafbfe; box-shadow: 0 3px 10px rgba(0,0,0,.4), 0 4px 22px rgba(0,0,0,.15); display: flex; flex-direction: column; align-items: center; gap: 42px; padding: 32px 0 0 4px; }
.cpill svg { width: 46px; height: 46px; }
.face { position: absolute; left: 2792px; top: 1252px; width: 88px; height: 88px; border-radius: 18px 0 0 18px; background: #fbfcfe; box-shadow: 0 1px 5px rgba(0,0,0,.08); padding: 18px 0 0 17px; }
.face svg { width: 53px; height: 52px; }
.scroll { position: absolute; left: 2730px; top: 1398px; width: 19px; height: 312px; border-radius: 10px; background: #dadce0; }
.gram { position: absolute; left: 2592px; top: 1630px; width: 120px; height: 66px; background: #fff; border: 2px solid #ced0de; border-radius: 33px 33px 33px 0; display: flex; align-items: center; padding-left: 14px; gap: 15px; }
.bulb { width: 32px; height: 42px; } .gg { width: 49px; height: 49px; }
```
